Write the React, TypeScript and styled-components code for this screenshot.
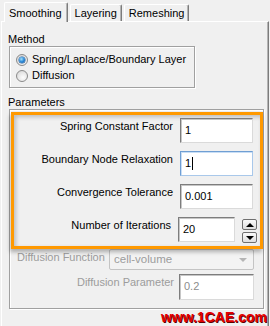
import styled, { createGlobalStyle } from 'styled-components';

const GlobalStyle = createGlobalStyle`
    html, body {
        margin: 0;
        padding: 0;
        background: #f0f0f0;
    }
    body {
        font-family: 'Liberation Sans', Arial, sans-serif;
        font-size: 11px;
        color: #000;
    }
`;

interface TabProps {
    $active?: boolean;
}

interface LabelProps {
    $width: number;
    $align?: 'left' | 'right';
    $disabled?: boolean;
}

interface FieldProps {
    $width: number;
    $height?: number;
    $focused?: boolean;
    $muted?: boolean;
}

const tabs = ['Smoothing', 'Layering', 'Remeshing'];

const params = [
    { label: 'Spring Constant Factor', value: '1' },
    { label: 'Boundary Node Relaxation', value: '1', focused: true },
    { label: 'Convergence Tolerance', value: '0.001' },
];

const App = () => {
    return (
        <>
            <GlobalStyle />
            <Window>
                <TabStrip>
                    {tabs.map((t, i) => (
                        <Tab key={t} $active={i === 0}>
                            {t}
                        </Tab>
                    ))}
                </TabStrip>
                <Panel>
                    <SectionTitle>Method</SectionTitle>
                    <MethodBox>
                        <RadioRow>
                            <Radio $checked />
                            Spring/Laplace/Boundary Layer
                        </RadioRow>
                        <RadioRow>
                            <Radio />
                            Diffusion
                        </RadioRow>
                    </MethodBox>

                    <SectionTitle $gap>Parameters</SectionTitle>
                    <ParamsBox>
                        <Highlight>
                            {params.map((p) => (
                                <Row key={p.label}>
                                    <FieldLabel $width={159}>{p.label}</FieldLabel>
                                    <TextField $width={73} $focused={p.focused}>
                                        {p.value}
                                        {p.focused && <Caret />}
                                    </TextField>
                                </Row>
                            ))}
                            <Row $gap={7}>
                                <FieldLabel $width={157}>Number of Iterations</FieldLabel>
                                <TextField $width={57}>20</TextField>
                                <Spinner>
                                    <SpinButton>
                                        <Arrow $dir="up" />
                                    </SpinButton>
                                    <SpinButton>
                                        <Arrow $dir="down" />
                                    </SpinButton>
                                </Spinner>
                            </Row>
                        </Highlight>

                        <DisabledRow>
                            <FieldLabel $width={92} $align="left" $disabled>
                                Diffusion Function
                            </FieldLabel>
                            <Select>
                                cell-volume
                                <SelectArrow />
                            </Select>
                        </DisabledRow>
                        <ParamRow>
                            <FieldLabel $width={164} $disabled>
                                Diffusion Parameter
                            </FieldLabel>
                            <TextField $width={75} $height={26} $muted>
                                0.2
                            </TextField>
                        </ParamRow>
                    </ParamsBox>
                    <Watermark>www.1CAE.com</Watermark>
                </Panel>
            </Window>
        </>
    );
};

const Window = styled.div`
    position: relative;
    width: 270px;
    height: 326px;
    overflow: hidden;
    background: #f0f0f0;
`;

const TabStrip = styled.div`
    height: 21px;
    padding-left: 4px;
    display: flex;
    align-items: flex-end;
    gap: 2px;
    position: relative;
    z-index: 1;
`;

const Tab = styled.div<TabProps>`
    box-sizing: border-box;
    height: ${({ $active }) => ($active ? '20px' : '17px')};
    margin-bottom: ${({ $active }) => ($active ? '-1px' : '0')};
    padding: ${({ $active }) => ($active ? '3px 5px 0 4px' : '1px 4px 0 4px')};
    background: #f0f0f0;
    border-top: 1px solid #ffffff;
    border-left: 1px solid #ffffff;
    border-right: 1px solid #7c7c7c;
    box-shadow: inset -1px 0 0 #b4b4b4;
    border-radius: 2px 2px 0 0;
    font-size: 11px;
    line-height: 14px;
    white-space: nowrap;
`;

const Panel = styled.div`
    position: relative;
    box-sizing: border-box;
    margin-left: 1px;
    width: 268px;
    height: 305px;
    padding: 11px 0 0 6px;
    border-top: 1px solid #ffffff;
    border-left: 1px solid #ffffff;
    border-right: 1px solid #7c7c7c;
    box-shadow: inset -1px 0 0 #b4b4b4;
`;

const SectionTitle = styled.div<{ $gap?: boolean }>`
    line-height: 13px;
    height: 13px;
    margin-top: ${({ $gap }) => ($gap ? '8px' : '0')};
`;

const GroupBox = styled.div`
    box-sizing: border-box;
    margin-left: 1px;
    border: 1px solid #a0a0a0;
    box-shadow: 1px 1px 0 #ffffff, inset 1px 1px 0 #ffffff;
`;

const MethodBox = styled(GroupBox)`
    width: 186px;
    height: 42px;
    padding: 5px 0 0 6px;
    display: flex;
    flex-direction: column;
    gap: 1px;
`;

const RadioRow = styled.div`
    display: flex;
    align-items: center;
    gap: 4px;
    height: 15px;
    line-height: 13px;
`;

const Radio = styled.span<{ $checked?: boolean }>`
    position: relative;
    box-sizing: border-box;
    width: 12px;
    height: 12px;
    border-radius: 50%;
    border: 1px solid #8a8a8a;
    background: radial-gradient(circle at 60% 65%, #fdfdfd 0%, #e6e6e6 55%, #cfcfcf 100%);

    &::after {
        content: '';
        display: ${({ $checked }) => ($checked ? 'block' : 'none')};
        position: absolute;
        left: 2px;
        top: 2px;
        width: 6px;
        height: 6px;
        border-radius: 50%;
        background: radial-gradient(circle at 40% 35%, #a6e1fb 0%, #2c8ad8 50%, #0f4f95 100%);
        box-shadow: 0 0 0 0.5px #1d5a99;
    }
`;

const ParamsBox = styled(GroupBox)`
    width: 255px;
    height: 200px;
    padding-top: 2px;
`;

const Highlight = styled.div`
    box-sizing: border-box;
    width: 252px;
    height: 137px;
    margin-left: 1px;
    padding: 3px 0 0 0;
    border: 3px solid #ff9900;
    display: flex;
    flex-direction: column;
    gap: 8px;
    box-shadow: inset 2px 2px 4px rgba(0, 0, 0, 0.22), -1px 3px 4px rgba(0, 0, 0, 0.28);
    position: relative;
    z-index: 1;
`;

const Row = styled.div<{ $gap?: number }>`
    display: flex;
    align-items: flex-start;
    gap: ${({ $gap }) => $gap ?? 7}px;
    height: 25px;
`;

const FieldLabel = styled.div<LabelProps>`
    flex: none;
    width: ${({ $width }) => $width}px;
    text-align: ${({ $align }) => $align ?? 'right'};
    color: ${({ $disabled }) => ($disabled ? '#9c9c9c' : '#000')};
    padding-top: 2px;
    line-height: 13px;
    white-space: nowrap;
`;

const TextField = styled.div<FieldProps>`
    box-sizing: border-box;
    flex: none;
    width: ${({ $width }) => $width}px;
    height: ${({ $height }) => $height ?? 25}px;
    padding: 5px 3px 0 4px;
    display: flex;
    align-items: center;
    align-self: flex-start;
    height: ${({ $height }) => $height ?? 25}px;
    line-height: 13px;
    background: #ffffff;
    color: ${({ $muted }) => ($muted ? '#8c8c8c' : '#000')};
    border: 1px solid;
    border-color: ${({ $focused }) =>
        $focused ? '#6f9ed3 #a9c8ea #a9c8ea #6f9ed3' : '#7d7d7d #dadada #dadada #7d7d7d'};
    box-shadow: ${({ $focused }) =>
        $focused ? 'inset 1px 1px 0 #c9def5' : 'inset 1px 1px 0 #c6c6c6'};
    align-items: flex-start;
`;

const Caret = styled.span`
    display: inline-block;
    width: 1px;
    height: 13px;
    margin-left: 1px;
    background: #000;
`;

const Spinner = styled.div`
    display: flex;
    flex-direction: column;
    gap: 2px;
    margin-top: 2px;
`;

const SpinButton = styled.div`
    box-sizing: border-box;
    width: 15px;
    height: 11px;
    border: 1px solid #6f6f6f;
    border-radius: 2px;
    background: linear-gradient(#fafafa, #dedede);
    display: flex;
    align-items: center;
    justify-content: center;
`;

const Arrow = styled.span<{ $dir: 'up' | 'down' }>`
    width: 0;
    height: 0;
    border-left: 4px solid transparent;
    border-right: 4px solid transparent;
    ${({ $dir }) =>
        $dir === 'up' ? 'border-bottom: 4px solid #000;' : 'border-top: 4px solid #000;'}
`;

const DisabledRow = styled.div`
    display: flex;
    align-items: flex-start;
    padding-left: 7px;
    margin-top: 0;
    height: 21px;
`;

const Select = styled.div`
    position: relative;
    box-sizing: border-box;
    width: 145px;
    height: 21px;
    padding: 3px 0 0 4px;
    line-height: 13px;
    color: #9c9c9c;
    border: 1px solid #c4c4c4;
    border-radius: 2px;
    background: #f3f3f3;
    font-size: 11.5px;
`;

const SelectArrow = styled.span`
    position: absolute;
    right: 6px;
    top: 8px;
    width: 0;
    height: 0;
    border-left: 4px solid transparent;
    border-right: 4px solid transparent;
    border-top: 4px solid #b5b5b5;
`;

const ParamRow = styled.div`
    display: flex;
    align-items: flex-start;
    gap: 5px;
    margin-top: 4px;
`;

const Watermark = styled.div`
    position: absolute;
    right: 1px;
    bottom: 1px;
    font-family: 'Liberation Sans', Arial, sans-serif;
    font-weight: bold;
    font-size: 14px;
    line-height: 16px;
    color: #e40000;
    text-shadow: 1px 1px 0 #5a0000;
    letter-spacing: 0;
`;

export default App;
